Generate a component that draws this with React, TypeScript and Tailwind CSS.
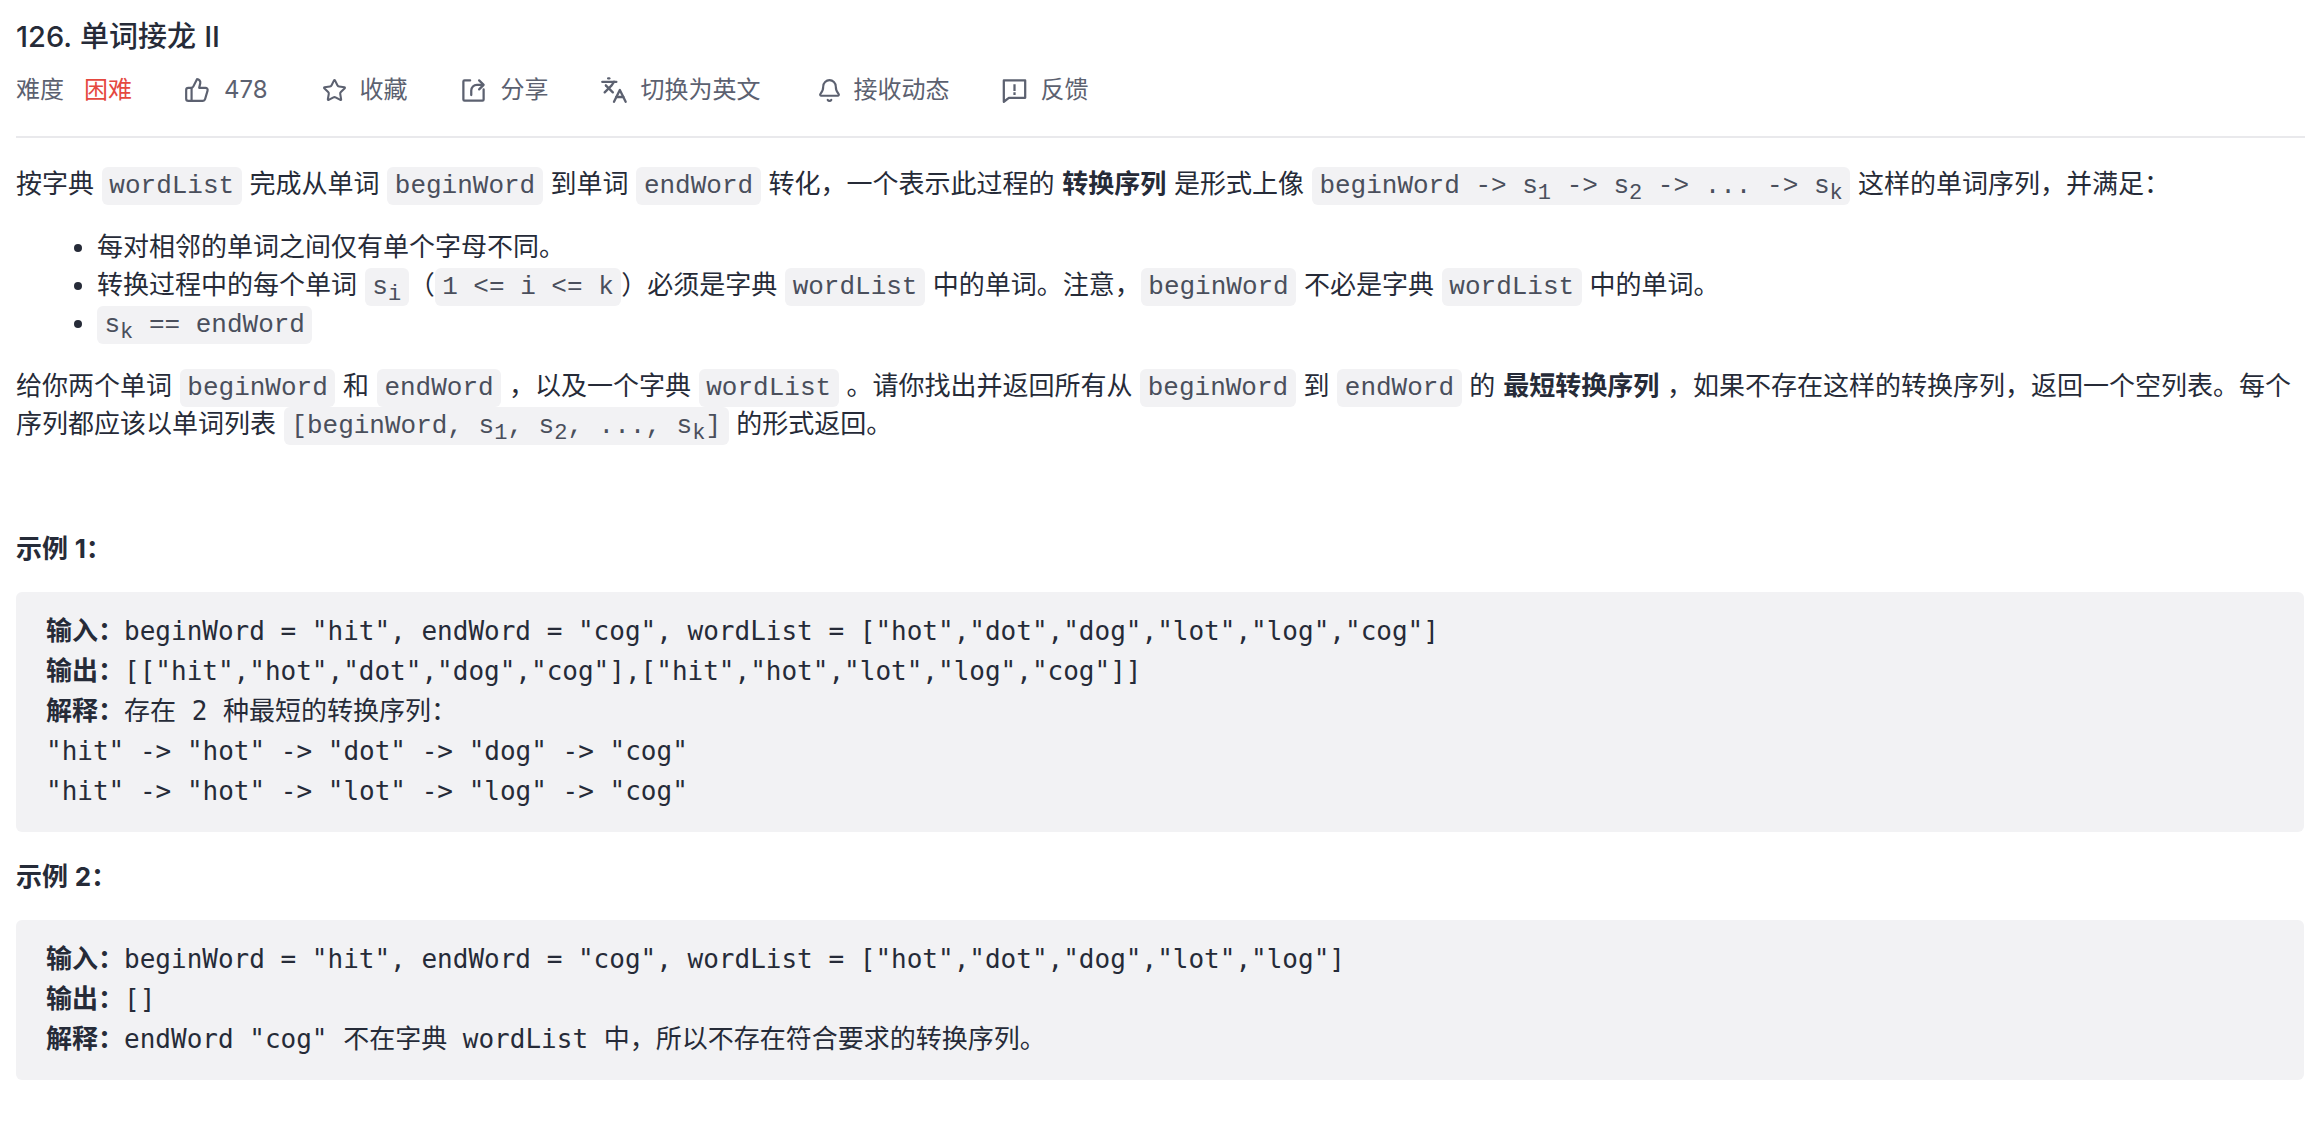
import React from 'react';
import { ThumbsUp, Star, Languages, Bell } from 'lucide-react';

const Code: React.FC<{ children: React.ReactNode }> = ({ children }) => (
  <code className="bg-[#f2f2f4] text-[#4a4f5c] rounded-[6px] px-[7.5px] py-[4px] text-[26px] leading-none [word-spacing:0] font-['Liberation_Mono',monospace]">
    {children}
  </code>
);

const Sub: React.FC<{ children: React.ReactNode }> = ({ children }) => (
  <sub className="text-[22px]">{children}</sub>
);

const Meta: React.FC<{ icon: React.ReactNode; label: string; className?: string }> = ({ icon, label, className }) => (
  <div className={`flex items-center ${className ?? ''}`}>
    {icon}
    <span>{label}</span>
  </div>
);

const ShareIcon = () => (
  <svg width="27" height="27" viewBox="0 0 24 24" fill="none" stroke="currentColor" strokeWidth="2" strokeLinecap="round" strokeLinejoin="round">
    <path d="M9 3H4a1 1 0 0 0-1 1v16a1 1 0 0 0 1 1h16a1 1 0 0 0 1-1v-9" />
    <path d="M10 16v-4a5 5 0 0 1 5-5h4" />
    <path d="M17 3l4 4-4 4" />
  </svg>
);

const FeedbackIcon = () => (
  <svg width="27" height="27" viewBox="0 0 24 24" fill="none" stroke="currentColor" strokeWidth="2" strokeLinejoin="round">
    <path d="M2.5 3h19v15.5H7L2.5 22z" />
    <path d="M12 6.5v6M12 13.5v2.5" />
  </svg>
);

const Pre: React.FC<{ children: React.ReactNode; className?: string }> = ({ children, className }) => (
  <pre className={`bg-[#f2f2f4] text-[#262b38] rounded-[6px] px-[30px] pt-[19px] pb-[21px] text-[26px] leading-[40px] [word-spacing:0] font-['DejaVu_Sans_Mono','Noto_Sans_CJK_SC',monospace] whitespace-pre ${className ?? ''}`}>
    {children}
  </pre>
);

export default function App() {
  return (
    <div className="min-h-[1122px] bg-white pl-4 pr-1 pt-[18px] text-[#262b38] text-[26px] leading-[38px] [word-spacing:0.5px] font-['Inter','Noto_Sans_CJK_SC',sans-serif]">
      <h1 className="text-[29px] leading-[38px] font-medium">126. 单词接龙 II</h1>

      <div className="flex items-center text-[24px] leading-[34px] text-[#5c6170] mt-[17px]">
        <span>难度</span>
        <span className="text-[#e5483f] ml-5">困难</span>
        <Meta className="ml-[52px] gap-[14px]" icon={<ThumbsUp size={26} strokeWidth={2} />} label="478" />
        <Meta className="ml-[54px] gap-[13px]" icon={<Star size={25} strokeWidth={2} />} label="收藏" />
        <Meta className="ml-[52px] gap-[14px]" icon={<ShareIcon />} label="分享" />
        <Meta className="ml-[51px] gap-[13px]" icon={<Languages size={28} strokeWidth={2} />} label="切换为英文" />
        <Meta className="ml-[56px] gap-[12px]" icon={<Bell size={25} strokeWidth={2} />} label="接收动态" />
        <Meta className="ml-[51px] gap-[13px]" icon={<FeedbackIcon />} label="反馈" />
      </div>

      <hr className="border-t-2 border-[#e9e9ec] mt-[29px] mr-[-1px]" />

      <p className="mt-[27px]">
        按字典 <Code>wordList</Code> 完成从单词 <Code>beginWord</Code> 到单词 <Code>endWord</Code> 转化，一个表示此过程的 <b className="font-bold">转换序列</b> 是形式上像 <Code>beginWord -&gt; s<Sub>1</Sub> -&gt; s<Sub>2</Sub> -&gt; ... -&gt; s<Sub>k</Sub></Code> 这样的单词序列，并满足：
      </p>

      <ul className="list-disc pl-[81px] mt-[25px]">
        <li>每对相邻的单词之间仅有单个字母不同。</li>
        <li>
          转换过程中的每个单词 <Code>s<Sub>i</Sub></Code>（<Code>1 &lt;= i &lt;= k</Code>）必须是字典 <Code>wordList</Code> 中的单词。注意，<Code>beginWord</Code> 不必是字典 <Code>wordList</Code> 中的单词。
        </li>
        <li>
          <Code>s<Sub>k</Sub> == endWord</Code>
        </li>
      </ul>

      <p className="mt-[25px]">
        给你两个单词 <Code>beginWord</Code> 和 <Code>endWord</Code> ，以及一个字典 <Code>wordList</Code> 。请你找出并返回所有从 <Code>beginWord</Code> 到 <Code>endWord</Code> 的 <b className="font-bold">最短转换序列</b> ，如果不存在这样的转换序列，返回一个空列表。每个序列都应该以单词列表 <Code>[beginWord, s<Sub>1</Sub>, s<Sub>2</Sub>, ..., s<Sub>k</Sub>]</Code> 的形式返回。
      </p>

      <p className="mt-[87px] font-bold">示例 1：</p>
      <Pre className="mt-[24px]">
        <b>输入：</b>beginWord = "hit", endWord = "cog", wordList = ["hot","dot","dog","lot","log","cog"]{'\n'}
        <b>输出：</b>[["hit","hot","dot","dog","cog"],["hit","hot","lot","log","cog"]]{'\n'}
        <b>解释：</b>存在 2 种最短的转换序列：{'\n'}
        "hit" -&gt; "hot" -&gt; "dot" -&gt; "dog" -&gt; "cog"{'\n'}
        "hit" -&gt; "hot" -&gt; "lot" -&gt; "log" -&gt; "cog"
      </Pre>

      <p className="mt-[26px] font-bold">示例 2：</p>
      <Pre className="mt-[24px]">
        <b>输入：</b>beginWord = "hit", endWord = "cog", wordList = ["hot","dot","dog","lot","log"]{'\n'}
        <b>输出：</b>[]{'\n'}
        <b>解释：</b>endWord "cog" 不在字典 wordList 中，所以不存在符合要求的转换序列。
      </Pre>
    </div>
  );
}
